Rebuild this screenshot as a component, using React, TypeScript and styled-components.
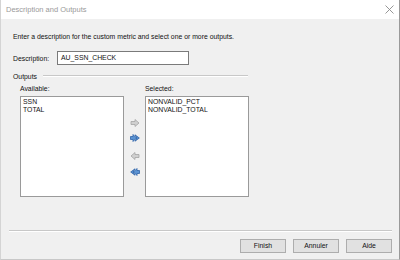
import React from 'react';
import styled, { createGlobalStyle } from 'styled-components';

const Global = createGlobalStyle`
  html, body { margin: 0; padding: 0; background: #f0f0f0; }
  body { font-family: "Liberation Sans", Arial, sans-serif; }
`;

const Window = styled.div`
  width: 400px;
  height: 260px;
  box-sizing: border-box;
  display: flex;
  flex-direction: column;
  border-right: 1px solid #9a9a9a;
  border-left: 1px solid #d4d4d4;
  border-bottom: 1px solid #c8c8c8;
  overflow: hidden;
`;

const TitleBar = styled.div`
  height: 19px;
  flex: none;
  background: #fff;
  display: flex;
  align-items: center;
  justify-content: space-between;
  padding: 0 5px 0 5px;
  font-size: 7.5px;
  color: #9a9a9a;
`;

const Body = styled.div`
  flex: 1;
  background: #f0f0f0;
  display: flex;
  flex-direction: column;
  padding: 0 7px 0 12px;
  font-size: 6.85px;
  color: #111;
`;

const Line = styled.div<{ $top: number }>`
  margin-top: ${p => p.$top}px;
  height: 10px;
  line-height: 10px;
  white-space: nowrap;
`;

const DescRow = styled.div`
  margin-top: 9px;
  display: flex;
  align-items: center;
  height: 14px;
`;

const Label = styled.span`
  width: 44px;
`;

const TextBox = styled.div`
  width: 132px;
  height: 14px;
  box-sizing: border-box;
  background: #fff;
  border: 1px solid #7a7a7a;
  padding-left: 3px;
  line-height: 12px;
`;

const GroupHeader = styled.div`
  margin-top: 6px;
  height: 10px;
  display: flex;
  align-items: center;
  gap: 6px;
  width: 235px;
`;

const Rule = styled.div`
  flex: 1;
  height: 1px;
  background: #c8c8c8;
  border-bottom: 1px solid #fff;
`;

const ListsRow = styled.div`
  margin-top: 3px;
  padding-left: 7px;
  display: flex;
`;

const Column = styled.div`
  display: flex;
  flex-direction: column;
  width: 104px;
`;

const ColLabel = styled.div`
  height: 10px;
  line-height: 10px;
  margin-bottom: 2px;
`;

const ListBox = styled.div`
  height: 101px;
  box-sizing: border-box;
  background: #fff;
  border: 1px solid #9a9a9a;
  padding: 1px 2px;
`;

const Item = styled.div`
  height: 8px;
  line-height: 8px;
`;

const ArrowCol = styled.div`
  width: 21px;
  padding-top: 35px;
  display: flex;
  flex-direction: column;
  align-items: center;
`;

const ArrowSlot = styled.div<{ $gap: number }>`
  margin-top: ${p => p.$gap}px;
  height: 8px;
  display: flex;
`;

const Spacer = styled.div`
  flex: 1;
`;

const Separator = styled.div`
  height: 1px;
  margin-left: -4px;
  background: #c8c8c8;
  border-bottom: 1px solid #fff;
`;

const ButtonRow = styled.div`
  display: flex;
  justify-content: flex-end;
  gap: 7px;
  margin: 7px 0 6px;
`;

const Button = styled.div`
  width: 46px;
  height: 14px;
  box-sizing: border-box;
  background: #e1e1e1;
  border: 1px solid #adadad;
  text-align: center;
  line-height: 12px;
`;

const gray = { fill: '#d0d0d0', stroke: '#a4a4a4' };
const blue = { fill: '#5b93d3', stroke: '#2d62a8' };

const RightArrow = ({ c }: { c: typeof gray }) => (
  <svg width="10" height="8" viewBox="0 0 10 8">
    <path d="M1 2.5H5V0.5L9 4L5 7.5V5.5H1Z" fill={c.fill} stroke={c.stroke} strokeWidth="0.8" />
  </svg>
);

const LeftArrow = ({ c }: { c: typeof gray }) => (
  <svg width="10" height="8" viewBox="0 0 10 8">
    <path d="M9 2.5H5V0.5L1 4L5 7.5V5.5H9Z" fill={c.fill} stroke={c.stroke} strokeWidth="0.8" />
  </svg>
);

const DoubleRight = ({ c }: { c: typeof gray }) => (
  <svg width="10" height="8" viewBox="0 0 10 8">
    <path d="M0.5 2.5H3V0.5L6.5 4L3 7.5V5.5H0.5Z" fill={c.fill} stroke={c.stroke} strokeWidth="0.8" />
    <path d="M5 0.8L9.3 4L5 7.2L6.8 4Z" fill={c.fill} stroke={c.stroke} strokeWidth="0.8" />
  </svg>
);

const DoubleLeft = ({ c }: { c: typeof gray }) => (
  <svg width="10" height="8" viewBox="0 0 10 8">
    <path d="M9.5 2.5H7V0.5L3.5 4L7 7.5V5.5H9.5Z" fill={c.fill} stroke={c.stroke} strokeWidth="0.8" />
    <path d="M5 0.8L0.7 4L5 7.2L3.2 4Z" fill={c.fill} stroke={c.stroke} strokeWidth="0.8" />
  </svg>
);

const CloseIcon = () => (
  <svg width="9" height="9" viewBox="0 0 9 9">
    <path d="M0.5 0.5L8.5 8.5M8.5 0.5L0.5 8.5" stroke="#8a8a8a" strokeWidth="0.9" />
  </svg>
);

export default function App() {
  const available = ['SSN', 'TOTAL'];
  const selected = ['NONVALID_PCT', 'NONVALID_TOTAL'];

  return (
    <>
      <Global />
      <Window>
        <TitleBar>
          <span>Description and Outputs</span>
          <CloseIcon />
        </TitleBar>
        <Body>
          <Line $top={13}>Enter a description for the custom metric and select one or more outputs.</Line>
          <DescRow>
            <Label>Description:</Label>
            <TextBox>AU_SSN_CHECK</TextBox>
          </DescRow>
          <GroupHeader>
            <span>Outputs</span>
            <Rule />
          </GroupHeader>
          <ListsRow>
            <Column>
              <ColLabel>Available:</ColLabel>
              <ListBox>
                {available.map(a => <Item key={a}>{a}</Item>)}
              </ListBox>
            </Column>
            <ArrowCol>
              <ArrowSlot $gap={0}><RightArrow c={gray} /></ArrowSlot>
              <ArrowSlot $gap={7}><DoubleRight c={blue} /></ArrowSlot>
              <ArrowSlot $gap={10}><LeftArrow c={gray} /></ArrowSlot>
              <ArrowSlot $gap={8}><DoubleLeft c={blue} /></ArrowSlot>
            </ArrowCol>
            <Column>
              <ColLabel>Selected:</ColLabel>
              <ListBox>
                {selected.map(s => <Item key={s}>{s}</Item>)}
              </ListBox>
            </Column>
          </ListsRow>
          <Spacer />
          <Separator />
          <ButtonRow>
            <Button>Finish</Button>
            <Button>Annuler</Button>
            <Button>Aide</Button>
          </ButtonRow>
        </Body>
      </Window>
    </>
  );
}
